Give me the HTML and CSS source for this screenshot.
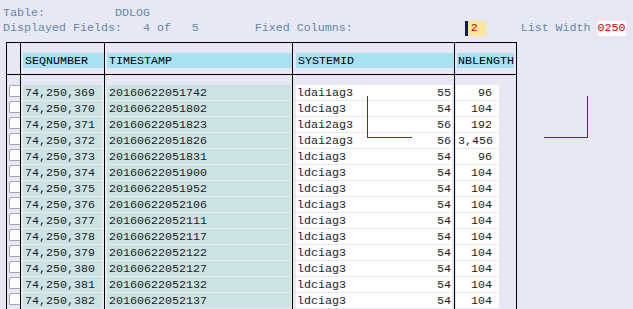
FILE: index.html
```html
<!DOCTYPE html>
<html lang="en">
<head>
  <meta charset="UTF-8">
  <title>DDLOG List</title>
  <link rel="stylesheet" href="styles.css">
</head>
<body>

<div class="screen">
  <!-- List header lines -->
  <div class="info">
    <div class="info-line">Table:          DDLOG</div>
    <div class="info-line">Displayed Fields:   4 of   5        Fixed Columns:                <span class="fixed-input">2</span>     List Width <span class="width-value">0250</span></div>
  </div>

  <!-- Result list -->
  <div class="list" id="list">
    <div class="row head">
      <div class="col c0"></div>
      <div class="col c1"><div class="hcell">SEQNUMBER</div></div>
      <div class="col c2"><div class="hcell">TIMESTAMP</div></div>
      <div class="col c3"><div class="hcell">SYSTEMID</div></div>
      <div class="col c4"><div class="hcell">NBLENGTH</div></div>
    </div>
    <div class="row spacer">
      <div class="col c0"></div>
      <div class="col c1"></div>
      <div class="col c2"></div>
      <div class="col c3"></div>
      <div class="col c4"></div>
    </div>
  </div>

  <!-- Selection corner marks -->
  <div class="corner corner-left"></div>
  <div class="corner corner-right"></div>
</div>

<script>
  const rows = [
    ['74,250,369', '20160622051742', 'ldai1ag3', '55', '96'],
    ['74,250,370', '20160622051802', 'ldciag3', '54', '104'],
    ['74,250,371', '20160622051823', 'ldai2ag3', '56', '192'],
    ['74,250,372', '20160622051826', 'ldai2ag3', '56', '3,456'],
    ['74,250,373', '20160622051831', 'ldciag3', '54', '96'],
    ['74,250,374', '20160622051900', 'ldciag3', '54', '104'],
    ['74,250,375', '20160622051952', 'ldciag3', '54', '104'],
    ['74,250,376', '20160622052106', 'ldciag3', '54', '104'],
    ['74,250,377', '20160622052111', 'ldciag3', '54', '104'],
    ['74,250,378', '20160622052117', 'ldciag3', '54', '104'],
    ['74,250,379', '20160622052122', 'ldciag3', '54', '104'],
    ['74,250,380', '20160622052127', 'ldciag3', '54', '104'],
    ['74,250,381', '20160622052132', 'ldciag3', '54', '104'],
    ['74,250,382', '20160622052137', 'ldciag3', '54', '104']
  ];

  const list = document.getElementById('list');
  rows.forEach(([seq, stamp, sys, len, nb]) => {
    const row = document.createElement('div');
    row.className = 'row';
    row.innerHTML =
      '<div class="col c0"><span class="check"></span></div>' +
      `<div class="col c1"><div class="cell key">${seq}</div></div>` +
      `<div class="col c2"><div class="cell key">${stamp}</div></div>` +
      `<div class="col c3"><div class="cell split"><span>${sys}</span><span>${len}</span></div></div>` +
      `<div class="col c4"><div class="cell num">${nb}</div></div>`;
    list.appendChild(row);
  });
</script>

</body>
</html>
```

FILE: styles.css
```css
/* SAP style list screen */
body {
  margin: 0;
  background-color: #e8e8f4;
  font-family: "Liberation Mono", "DejaVu Sans Mono", monospace;
  font-size: 11.67px;
  color: #1c1c24;
  overflow: hidden;
}

.screen {
  position: relative;
  height: 309px;
}

/* Header lines above the list */
.info {
  padding: 6px 0 0 3px;
}

.info-line {
  height: 15px;
  line-height: 15px;
  white-space: pre;
  color: #5f88a8;
}

.fixed-input {
  display: inline-block;
  width: 15px;
  height: 15px;
  padding-left: 3px;
  border-left: 3px solid #0c1a66;
  background-color: #fbe89c;
  color: #cc0000;
  vertical-align: top;
}

.width-value {
  display: inline-block;
  height: 15px;
  background-color: #ffffff;
  color: #cc0000;
  vertical-align: top;
}

/* The list grid */
.list {
  margin: 6px 0 0 6px;
  width: 511px;
}

.row {
  display: flex;
  height: 16px;
}

.row.head {
  height: 33px;
  border-top: 1px solid #000;
  border-bottom: 1px solid #000;
  box-sizing: border-box;
}

.row.spacer {
  height: 10px;
}

.col {
  box-sizing: border-box;
  border-left: 1px solid #000;
}

.c0 { width: 14px; padding-left: 1px; }
.c1 { width: 84px; padding-left: 2px; }
.c2 { width: 188px; padding-left: 2px; }
.c3 { width: 162px; padding-left: 3px; }
.c4 { width: 63px; padding-left: 1px; border-right: 1px solid #000; }

/* Column titles */
.hcell {
  margin-top: 10px;
  height: 15px;
  line-height: 17px;
  padding-left: 2px;
  background-color: #a6e2f2;
  color: #000;
}

.c4 .hcell {
  margin-left: 1px;
  width: 56px;
  padding-left: 1px;
}

/* Data cells */
.cell {
  height: 15px;
  line-height: 17px;
  padding-left: 2px;
  box-sizing: border-box;
  white-space: pre;
}

.cell.key {
  background-color: #cce3e3;
}
.c1 .cell { width: 79px; }
.c2 .cell { width: 184px; }

.cell.split {
  width: 156px;
  display: flex;
  justify-content: space-between;
  padding-left: 1px;
  padding-right: 1px;
  background-color: #ffffff;
}

.cell.num {
  width: 43px;
  padding-right: 7px;
  text-align: right;
  background-color: #ffffff;
}

/* Checkbox */
.check {
  display: block;
  box-sizing: border-box;
  width: 12px;
  height: 12px;
  margin-left: 1px;
  background-color: #ffffff;
  border: 1px solid #a4a4ac;
  border-radius: 2px 0 0 0;
}

/* Red selection corners drawn over the list */
.corner {
  position: absolute;
  top: 96px;
  height: 42px;
  box-sizing: border-box;
  border-bottom: 1px solid #c40000;
}
.corner-left {
  left: 367px;
  width: 45px;
  border-left: 1px solid #c40000;
}
.corner-right {
  left: 544px;
  width: 44px;
  border-right: 1px solid #c40000;
}
```
